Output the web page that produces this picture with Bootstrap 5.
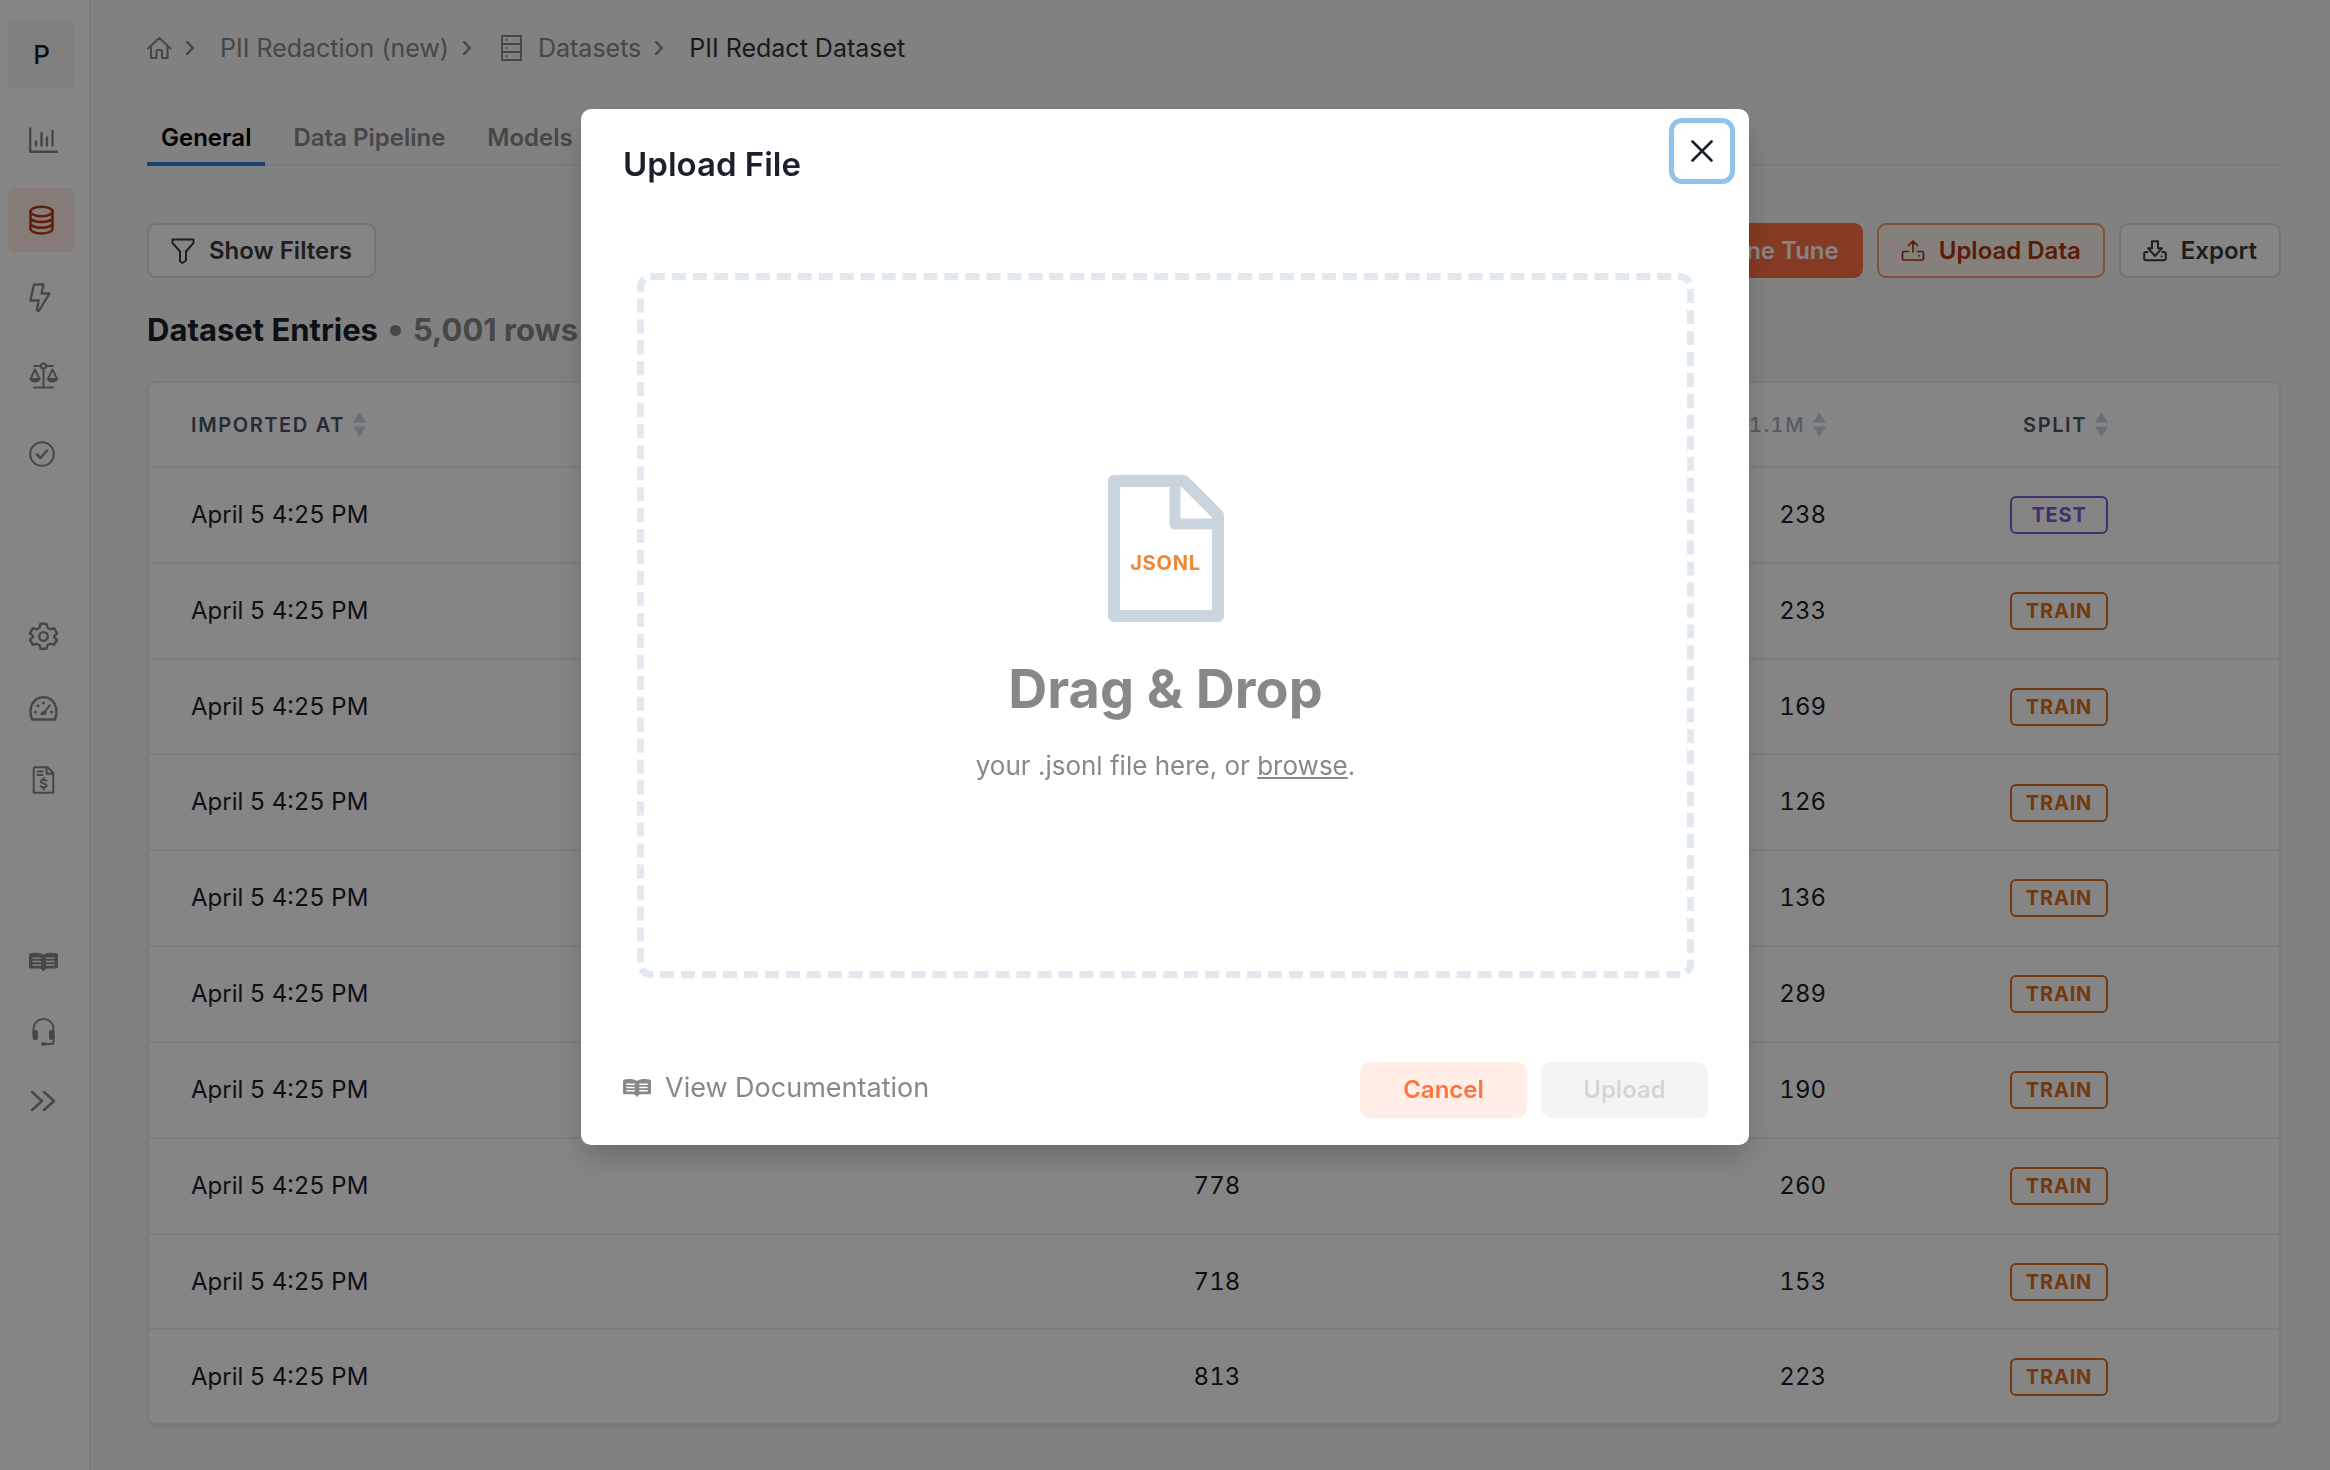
<!DOCTYPE html>
<html lang="en">
<head>
<meta charset="utf-8">
<meta name="viewport" content="width=device-width, initial-scale=1">
<title>PII Redact Dataset</title>
<link href="https://cdn.jsdelivr.net/npm/bootstrap@5.3.0/dist/css/bootstrap.min.css" rel="stylesheet">
<style>
body{font-family:Inter,"Liberation Sans",sans-serif;font-size:24px;line-height:36px;background:#f7f7f7;color:#1a202c;overflow:hidden}
svg{display:block;flex:none}
.ln{fill:none;stroke:currentColor;stroke-width:2;stroke-linecap:round;stroke-linejoin:round}
/* sidebar */
.side{flex:0 0 91px;background:#fff;border-right:2px solid #ebebeb;padding:19px 14px 0 8px}
.side-proj{height:69px;padding-top:2px;border-radius:6px;background:#f5f5f5;color:#1a202c;font-size:26px}
.side-item{height:64px;padding-left:21px;border-radius:6px;color:#888}
.side-item.active{background:#ffede5;color:#b83a14}
.side-sm{height:48px}
.grp-a{gap:14px;margin-top:22px}
.grp-b{gap:24px;margin-top:126px}
.grp-c{gap:22px;margin-top:134px}
/* main */
.page{padding:24px 49px 0 56px;min-width:0}
.crumbs{height:48px;color:#888;font-size:25px}
.crumbs a{color:inherit;text-decoration:none}
.crumbs .sep{margin:0 26px 0 14px}
.crumbs .active{color:#333}
.tabs{margin-top:36px;border-bottom:2px solid #ebebeb;gap:14px}
.tabs .nav-link{padding:16px 14px 10px;color:#888;font-weight:600;line-height:28px;border:0;border-bottom:4px solid transparent;border-radius:0;margin-bottom:-2px;font-size:24px}
.tabs .nav-link.active{color:#000;border-color:#3182ce;background:none}
.tools{margin-top:57px;gap:14px}
.tool{height:55px;padding:0 22px;border:2px solid #dedede;border-radius:9px;background:#fff;color:#3a3a3a;font-size:24px;font-weight:600;gap:14px;line-height:28px}
.tool.fine{background:#ff7143;border-color:#ff7143;color:#fff}
.tool.up{background:#fff6ee;border-color:#f89a7a;color:#ad340f}
.head{font-size:31px;line-height:40px;font-weight:700;margin:32px 0 31px;gap:12px}
.head span{color:#888}
.dot{width:11px;height:11px;border-radius:50%;background:#888}
.sheet{border:2px solid #ebebeb;border-radius:9px;background:#fff;box-shadow:0 2px 3px rgba(0,0,0,.08);overflow:hidden}
.sheet table{margin:0;height:1040px;table-layout:fixed;font-variant-numeric:tabular-nums;--bs-table-bg:#fff;--bs-table-color:#1a202c}
.sheet th,.sheet td{padding:0 44px 0 42px;border-bottom:2px solid #eee;vertical-align:middle;font-size:24px}
.sheet tr:last-child td{border-bottom:0}
.sheet th{height:84px;font-size:20px;font-weight:600;letter-spacing:.08em;color:#4a5568}
.sheet thead tr th{border-bottom:2px solid #edf2f7}
.sheet .total{margin-left:14px;font-weight:500;color:#a0aec0}
.sheet th:last-child,.sheet td:last-child{padding-right:171px}
.sorter{border:0;background:none;padding:0;color:inherit;font:inherit;letter-spacing:inherit;display:inline-flex;align-items:center;gap:8px}
.tag{display:inline-flex;align-items:center;justify-content:center;width:98px;height:38px;border:2px solid #dd6b20;border-radius:6px;color:#dd6b20;font-size:20px;font-weight:700;letter-spacing:.04em;vertical-align:middle}
.tag.test{color:#805ad5;border-color:#805ad5}
/* dialog */
.modal-backdrop.show{opacity:.48}
.modal-dialog{max-width:1168px;margin-top:109px}
.modal-content{border:0;border-radius:10px;box-shadow:0 15px 30px -4px rgba(0,0,0,.22)}
.modal-header{border:0;padding:32px 19px 0 42px;align-items:flex-start;height:108px}
.modal-title{font-size:33px;line-height:46px;font-weight:600}
.closer{width:56px;height:56px;margin-top:-18px;border:0;border-radius:8px;background:#fff;box-shadow:0 0 0 5px #90c3eb;color:#1a202c}
.modal-body{padding:56px 55px 0 56px}
.drop{height:705px;padding-top:9px;border:7px dashed #e2e8f0;border-radius:14px;color:#888}
.sheet-icon{width:116px;height:147px;position:relative}
.sheet-icon b{position:absolute;left:0;right:0;top:76px;text-align:center;font-size:20px;line-height:24px;color:#ed8936;letter-spacing:.04em}
.drop h2{font-size:54px;line-height:64px;font-weight:700;margin:35px 0 0}
.drop p{font-size:26px;line-height:40px;margin:25px 0 0}
.drop p a{color:inherit}
.modal-footer{border:0;padding:84px 41px 27px 42px;justify-content:space-between}
.modal-footer>*{margin:0}
.docs{color:#888;font-size:27px;line-height:40px;text-decoration:none;gap:14px;padding-bottom:4px}
.acts{gap:14px}
.act{width:167px;height:56px;border:0;border-radius:10px;font-size:24px;font-weight:600;line-height:28px;padding:0}
.act.cancel{background:#ffede6;color:#ff733f}
.act.send:disabled{background:#f4f4f4;color:#d6d6d6;opacity:1}
</style>
<script src="https://cdn.jsdelivr.net/npm/bootstrap@5.3.0/dist/js/bootstrap.bundle.min.js"></script>
</head>
<body>
<svg width="0" height="0" class="position-absolute" aria-hidden="true">
  <symbol id="i-book" viewBox="0 0 30 20"><path fill="currentColor" d="M2 1C5 .3 11-.4 15 2.600 19-.4 25 .3 28 1c1.300.3 2 1 2 2v12c0 1-.8 1.600-1.800 1.600H19c-1.500 0-2.600 1.400-4 3.200-1.400-1.800-2.500-3.200-4-3.200H1.800C.8 16.600 0 16 0 15V3c0-1 .7-1.700 2-2z"/><path d="M3.500 6h9M3.500 9.500h9M3.500 13h9M17.500 6h9M17.500 9.500h9M17.500 13h9" stroke="#fff" stroke-width="1.500"/></symbol>
  <symbol id="i-sort" viewBox="0 0 13 25"><path fill="#cbd5e0" d="M6.500 0 13 10.500H0zM6.500 25 0 14.500h13z"/></symbol>
  <symbol id="i-chev" viewBox="0 0 8 14"><path class="ln" style="stroke-width:2.400" d="m1.200 1.200 5.600 5.800-5.600 5.800"/></symbol>
</svg>
<div class="d-flex min-vh-100">
  <nav class="side" aria-label="Main">
    <a href="#" class="side-proj d-flex align-items-center justify-content-center text-decoration-none fw-medium">P</a>
    <div class="grp-a d-flex flex-column">
      <a href="#" class="side-item d-flex align-items-center" aria-label="Dashboard"><svg width="29" height="30"><path class="ln" style="stroke-width:2.400" d="M1.200 1.500v23.200H28M7 14.500v4M12.500 6v12.500M18 10.500v8M23.500 4v14.500"/></svg></a>
      <a href="#" class="side-item active d-flex align-items-center" aria-label="Datasets"><svg width="26" height="30"><g class="ln" style="stroke-width:2.500"><ellipse cx="12.500" cy="6.500" rx="11" ry="4.800"/><path d="M1.500 6.500v17.300c0 2.700 5 4.800 11 4.800s11-2.100 11-4.800V6.500M1.500 12.500c0 2.600 5 4.500 11 4.500s11-1.900 11-4.500M1.500 18.300c0 2.600 5 4.500 11 4.500s11-1.900 11-4.500"/></g></svg></a>
      <a href="#" class="side-item d-flex align-items-center" aria-label="Fine tunes"><svg width="24" height="30"><path class="ln" style="stroke-width:2.300" d="M5 1.500h9.500L12.500 10.500H20.500L9.800 28 7.800 27.500 9.800 17.500H1.300z"/></svg></a>
      <a href="#" class="side-item d-flex align-items-center" aria-label="Evaluations"><svg width="30" height="28"><g class="ln"><path d="M5 4h6.500M17.500 4H24M14.500 7v18.500M5 25.500h19M6 7.500 1.500 17M6 7.500 10.500 17M23.500 7.500 19 17M23.500 7.500 28 17"/><circle cx="14.500" cy="4" r="2.600"/></g><path fill="currentColor" d="M.5 16h11c0 6-11 6-11 0zM18 16h11c0 6-11 6-11 0z"/></svg></a>
      <a href="#" class="side-item d-flex align-items-center" aria-label="Monitoring"><svg width="27" height="28"><g class="ln"><circle cx="13" cy="14" r="11.800"/><path d="m8 14.500 3.500 3.500L18 10.500" style="stroke-width:2.500"/></g></svg></a>
    </div>
    <div class="grp-b d-flex flex-column">
      <a href="#" class="side-item side-sm d-flex align-items-center" aria-label="Settings"><svg width="29" height="28" viewBox="0 0 29 28"><g class="ln" style="stroke-width:2.400"><path d="M11.500 1.800h6l1 4 2.600 1.500 4-1.100 3 5.100-3 2.700v1l3 2.700-3 5.100-4-1.100-2.600 1.500-1 3.500h-6l-1-3.500-2.600-1.500-4 1.100-3-5.100 3-2.700v-1l-3-2.700 3-5.100 4 1.100 2.600-1.500z"/><circle cx="14.500" cy="14.400" r="4.300"/></g></svg></a>
      <a href="#" class="side-item side-sm d-flex align-items-center" aria-label="Usage"><svg width="29" height="25"><path class="ln" d="M3 23.500C-1.500 11 5 1.300 14.500 1.300S30.500 11 26 23.500z" style="stroke-width:2.400"/><g fill="currentColor"><circle cx="6.500" cy="16" r="1.500"/><circle cx="9" cy="9.800" r="1.500"/><circle cx="14.500" cy="7" r="1.500"/><circle cx="22.700" cy="16" r="1.500"/><path d="m20.500 8 1.500 1.200-4.800 6.300c1 2.500-.7 3.500-2.500 3.500h-3c-.8-2 .8-3.800 3.300-4z"/></g></svg></a>
      <a href="#" class="side-item side-sm d-flex align-items-center" aria-label="Billing"><svg width="29" height="28"><path class="ln" d="M6.500 1.300h12l5.800 5.500v19.900H4.700V3c0-1 .8-1.700 1.800-1.700zM17.500 1.500v6.300H24M8.500 5.500h5M8.500 9h5M17.500 14.800c-1-1.500-5.500-1.600-5.500.8 0 2.700 5.500 1.200 5.500 4 0 2.200-4.500 2.300-5.800.6M14.700 12v2M14.700 21.500v2"/></svg></a>
    </div>
    <div class="grp-c d-flex flex-column">
      <a href="#" class="side-item side-sm d-flex align-items-center" aria-label="Documentation"><svg width="29" height="22"><use href="#i-book"/></svg></a>
      <a href="#" class="side-item side-sm d-flex align-items-center" aria-label="Support"><svg width="29" height="28"><path class="ln" d="M4.500 15v-3.500C4.500-2.500 24.500-2.500 24.500 11.500v12.200c0 1.700-1 2.300-2.300 2.300H15"/><g fill="currentColor"><rect x="3.500" y="12" width="5.500" height="10" rx="2"/><rect x="20" y="12" width="5.500" height="10" rx="2"/><rect x="12" y="24.300" width="6" height="3.400" rx="1.700"/></g></svg></a>
      <a href="#" class="side-item side-sm d-flex align-items-center" aria-label="Expand"><svg width="29" height="24"><path class="ln" d="m3 2 10 9-10 9M15 2l10 9-10 9" style="stroke-width:2.500"/></svg></a>
    </div>
  </nav>

  <main class="page flex-grow-1">
    <nav aria-label="Breadcrumb">
      <ol class="crumbs list-unstyled d-flex align-items-center mb-0">
        <li><a href="#" aria-label="Home"><svg width="25" height="24"><path class="ln" d="M1 12.500 12.300 2l11.300 10.500M4 10.500V22h5.500v-6.500c0-1 .5-1.500 1.500-1.500h2.500c1 0 1.500.5 1.500 1.500V22h5.500V10.500"/></svg></a></li>
        <li class="sep" aria-hidden="true"><svg width="8" height="14"><use href="#i-chev"/></svg></li>
        <li><a href="#">PII Redaction (new)</a></li>
        <li class="sep" aria-hidden="true"><svg width="8" height="14"><use href="#i-chev"/></svg></li>
        <li class="ms-1"><a href="#" class="d-flex align-items-center gap-3"><svg width="21" height="26"><path class="ln" style="stroke-linejoin:miter" d="M1 1h19v24H1zM1 9h19M1 17h19M5.500 5h.1M5.500 13h.1M5.500 21h.1"/></svg>Datasets</a></li>
        <li class="sep" aria-hidden="true"><svg width="8" height="14"><use href="#i-chev"/></svg></li>
        <li class="active" aria-current="page">PII Redact Dataset</li>
      </ol>
    </nav>
    <ul class="tabs nav nav-tabs">
      <li class="nav-item"><a class="nav-link active" href="#">General</a></li>
      <li class="nav-item"><a class="nav-link" href="#">Data Pipeline</a></li>
      <li class="nav-item"><a class="nav-link" href="#">Models</a></li>
    </ul>
    <div class="tools d-flex">
      <button type="button" class="tool btn d-flex align-items-center me-auto"><svg width="24" height="26"><path class="ln" d="M1.500 1.500h21v3.300L15 13.500v9L11.500 25 9 23.500v-10L1.500 4.800z"/></svg>Show Filters</button>
      <button type="button" class="tool fine btn d-flex align-items-center">Fine Tune</button>
      <button type="button" class="tool up btn d-flex align-items-center"><svg width="24" height="22"><path class="ln" style="stroke-width:1.700" d="M12 12V1.500M7.500 5.500 12 1.200l4.500 4.300M7.500 11.500H3c-1 0-1.500.5-1.500 1.500v5.500c0 1 .5 1.500 1.500 1.500h18c1 0 1.500-.5 1.500-1.500V13c0-1-.5-1.500-1.500-1.500h-4.500M18 15.700h.1"/></svg>Upload Data</button>
      <button type="button" class="tool btn d-flex align-items-center"><svg width="24" height="22"><path class="ln" d="M9 1.200h6v7h4L12 16 5 8.200h4zM4.500 12H3c-1 0-1.800.7-1.800 1.700v4.800c0 1 .8 1.700 1.800 1.700h18c1 0 1.800-.7 1.800-1.700v-4.800c0-1-.8-1.700-1.800-1.700h-1.500M18.500 16.500h.1"/></svg>Export</button>
    </div>
    <h1 class="head d-flex align-items-center">Dataset Entries <i class="dot"></i> <span>5,001 rows</span></h1>
    <div class="sheet">
      <table class="table">
        <colgroup><col style="width:27%"><col style="width:26.300%"><col style="width:27.500%"><col></colgroup>
        <thead><tr>
          <th scope="col"><button type="button" class="sorter">IMPORTED AT <svg width="13" height="25"><use href="#i-sort"/></svg></button></th>
          <th scope="col" class="text-end"><button type="button" class="sorter">INPUT <svg width="13" height="25"><use href="#i-sort"/></svg></button></th>
          <th scope="col" class="text-end"><button type="button" class="sorter">OUTPUT <span class="total">1.1M</span> <svg width="13" height="25"><use href="#i-sort"/></svg></button></th>
          <th scope="col" class="text-end"><button type="button" class="sorter">SPLIT <svg width="13" height="25"><use href="#i-sort"/></svg></button></th>
        </tr></thead>
        <tbody>
          <tr><td>April 5 4:25 PM</td><td></td><td class="text-end">238</td><td class="text-end"><span class="tag test">TEST</span></td></tr>
          <tr><td>April 5 4:25 PM</td><td></td><td class="text-end">233</td><td class="text-end"><span class="tag">TRAIN</span></td></tr>
          <tr><td>April 5 4:25 PM</td><td></td><td class="text-end">169</td><td class="text-end"><span class="tag">TRAIN</span></td></tr>
          <tr><td>April 5 4:25 PM</td><td></td><td class="text-end">126</td><td class="text-end"><span class="tag">TRAIN</span></td></tr>
          <tr><td>April 5 4:25 PM</td><td></td><td class="text-end">136</td><td class="text-end"><span class="tag">TRAIN</span></td></tr>
          <tr><td>April 5 4:25 PM</td><td></td><td class="text-end">289</td><td class="text-end"><span class="tag">TRAIN</span></td></tr>
          <tr><td>April 5 4:25 PM</td><td></td><td class="text-end">190</td><td class="text-end"><span class="tag">TRAIN</span></td></tr>
          <tr><td>April 5 4:25 PM</td><td class="text-end">778</td><td class="text-end">260</td><td class="text-end"><span class="tag">TRAIN</span></td></tr>
          <tr><td>April 5 4:25 PM</td><td class="text-end">718</td><td class="text-end">153</td><td class="text-end"><span class="tag">TRAIN</span></td></tr>
          <tr><td>April 5 4:25 PM</td><td class="text-end">813</td><td class="text-end">223</td><td class="text-end"><span class="tag">TRAIN</span></td></tr>
        </tbody>
      </table>
    </div>
  </main>
</div>

<div class="modal-backdrop show"></div>
<div class="modal show d-block" role="dialog" aria-modal="true" aria-labelledby="dlg-title" tabindex="-1">
  <div class="modal-dialog">
    <div class="modal-content">
      <div class="modal-header justify-content-between">
        <h2 class="modal-title" id="dlg-title">Upload File</h2>
        <button type="button" class="closer d-flex align-items-center justify-content-center" aria-label="Close"><svg width="22" height="22"><path class="ln" style="stroke-width:2.600" d="m1.500 1.500 19 19M20.500 1.500l-19 19"/></svg></button>
      </div>
      <div class="modal-body">
        <div class="drop d-flex flex-column align-items-center justify-content-center">
          <div class="sheet-icon"><svg width="116" height="147"><path d="M6 6h70l34 34v101H6z" fill="none" stroke="#cbd5e0" stroke-width="12" stroke-linejoin="round"/><path d="M67 8v41h40" fill="none" stroke="#cbd5e0" stroke-width="11" stroke-linejoin="round"/></svg><b>JSONL</b></div>
          <h2>Drag &amp; Drop</h2>
          <p>your .jsonl file here, or <a href="#">browse</a>.</p>
        </div>
      </div>
      <div class="modal-footer">
        <a href="#" class="docs d-flex align-items-center"><svg width="28" height="22"><use href="#i-book"/></svg>View Documentation</a>
        <div class="acts d-flex">
          <button type="button" class="act cancel btn">Cancel</button>
          <button type="button" class="act send btn" disabled>Upload</button>
        </div>
      </div>
    </div>
  </div>
</div>
</body>
</html>
